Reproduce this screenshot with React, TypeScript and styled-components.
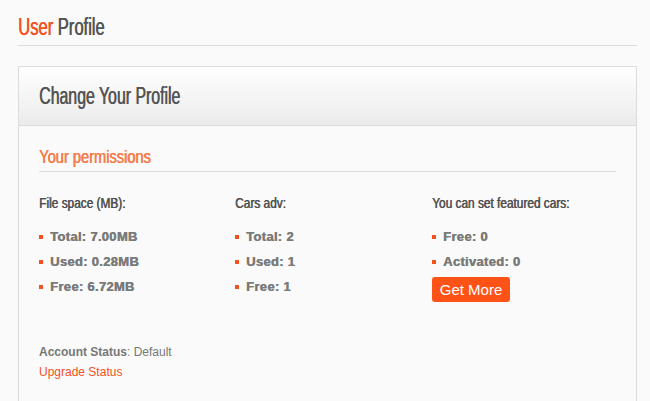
import React from "react";
import styled, { createGlobalStyle } from "styled-components";

const GlobalStyle = createGlobalStyle`
  html, body {
    margin: 0;
    padding: 0;
    background: #fafafa;
    font-family: "Liberation Sans", Arial, sans-serif;
    color: #777;
  }
`;

// no condensed face installed: narrow Liberation Sans horizontally
const Narrow = styled.span<{ $scale: number }>`
  display: inline-block;
  white-space: nowrap;
  transform: scaleX(${(p) => p.$scale});
  transform-origin: left center;
  text-shadow: 0.7px 0 0 currentColor;
`;

const Page = styled.div`
  padding: 15px 13px 0 18px;
`;

const PageTitle = styled.h1`
  margin: 0;
  padding: 0 0 6px;
  font-family: "Liberation Sans", Arial, sans-serif;
  font-weight: normal;
  font-size: 23px;
  line-height: 24px;
  color: #555;
  border-bottom: 1px solid #dcdcdc;
  em {
    font-style: normal;
    color: #f4511e;
  }
`;

const Card = styled.section`
  margin-top: 20px;
  border: 1px solid #dcdcdc;
  border-bottom: none;
  background: #fafafa;
  height: 360px;
`;

const CardHeader = styled.header`
  height: 58px;
  padding: 0 20px;
  display: flex;
  align-items: center;
  background: linear-gradient(to bottom, #ffffff, #ebebeb);
  border-bottom: 1px solid #dcdcdc;
`;

const CardTitle = styled.h2`
  margin: 0;
  font-weight: normal;
  font-size: 23px;
  line-height: 28px;
  color: #555;
`;

const CardBody = styled.div`
  padding: 20px 20px 0;
`;

const SectionTitle = styled.h3`
  margin: 0;
  padding-bottom: 3px;
  font-weight: normal;
  font-size: 19px;
  line-height: 22px;
  color: #f47b4a;
  border-bottom: 1px solid #dcdcdc;
`;

const Columns = styled.div`
  display: grid;
  grid-template-columns: 196px 197px 1fr;
  margin-top: 22px;
`;

const Column = styled.div`
  display: flex;
  flex-direction: column;
`;

const ColumnTitle = styled.h4`
  margin: 0 0 12px;
  font-weight: normal;
  font-size: 15px;
  line-height: 18px;
  color: #505050;
`;

const List = styled.ul`
  list-style: none;
  margin: 0;
  padding: 0;
`;

const Item = styled.li`
  display: flex;
  align-items: center;
  gap: 7px;
  height: 25px;
  font-weight: bold;
  font-size: 13px;
  letter-spacing: 0.3px;
  color: #7a7a7a;
  text-shadow: 0.5px 0 0 #7a7a7a;
  &::before {
    content: "";
    width: 4px;
    height: 4px;
    background: #f4511e;
  }
`;

const Button = styled.button`
  align-self: flex-start;
  margin-top: 3px;
  width: 78px;
  height: 25px;
  padding: 0;
  border: none;
  border-radius: 3px;
  background: #ff5216;
  color: #fff;
  font-family: "Liberation Sans", Arial, sans-serif;
  font-size: 15px;
  cursor: pointer;
`;

const Status = styled.p`
  margin: 40px 0 0;
  font-size: 12px;
  line-height: 20px;
  color: #777;
  b {
    font-weight: bold;
  }
`;

const Link = styled.a`
  display: block;
  font-size: 12px;
  line-height: 20px;
  color: #f4511e;
  text-decoration: none;
`;

const columns = [
  { title: "File space (MB):", items: ["Total: 7.00MB", "Used: 0.28MB", "Free: 6.72MB"] },
  { title: "Cars adv:", items: ["Total: 2", "Used: 1", "Free: 1"] },
  { title: "You can set featured cars:", items: ["Free: 0", "Activated: 0"], action: "Get More" },
];

export default function App() {
  return (
    <Page>
      <GlobalStyle />
      <PageTitle>
        <Narrow $scale={0.72}>
          <em>User</em> Profile
        </Narrow>
      </PageTitle>
      <Card>
        <CardHeader>
          <CardTitle>
            <Narrow $scale={0.69}>Change Your Profile</Narrow>
          </CardTitle>
        </CardHeader>
        <CardBody>
          <SectionTitle>
            <Narrow $scale={0.77}>Your permissions</Narrow>
          </SectionTitle>
          <Columns>
            {columns.map((col) => (
              <Column key={col.title}>
                <ColumnTitle>
                  <Narrow $scale={0.79}>{col.title}</Narrow>
                </ColumnTitle>
                <List>
                  {col.items.map((it) => (
                    <Item key={it}>{it}</Item>
                  ))}
                </List>
                {col.action && <Button>{col.action}</Button>}
              </Column>
            ))}
          </Columns>
          <Status>
            <b>Account Status</b>: Default
          </Status>
          <Link href="#">Upgrade Status</Link>
        </CardBody>
      </Card>
    </Page>
  );
}
